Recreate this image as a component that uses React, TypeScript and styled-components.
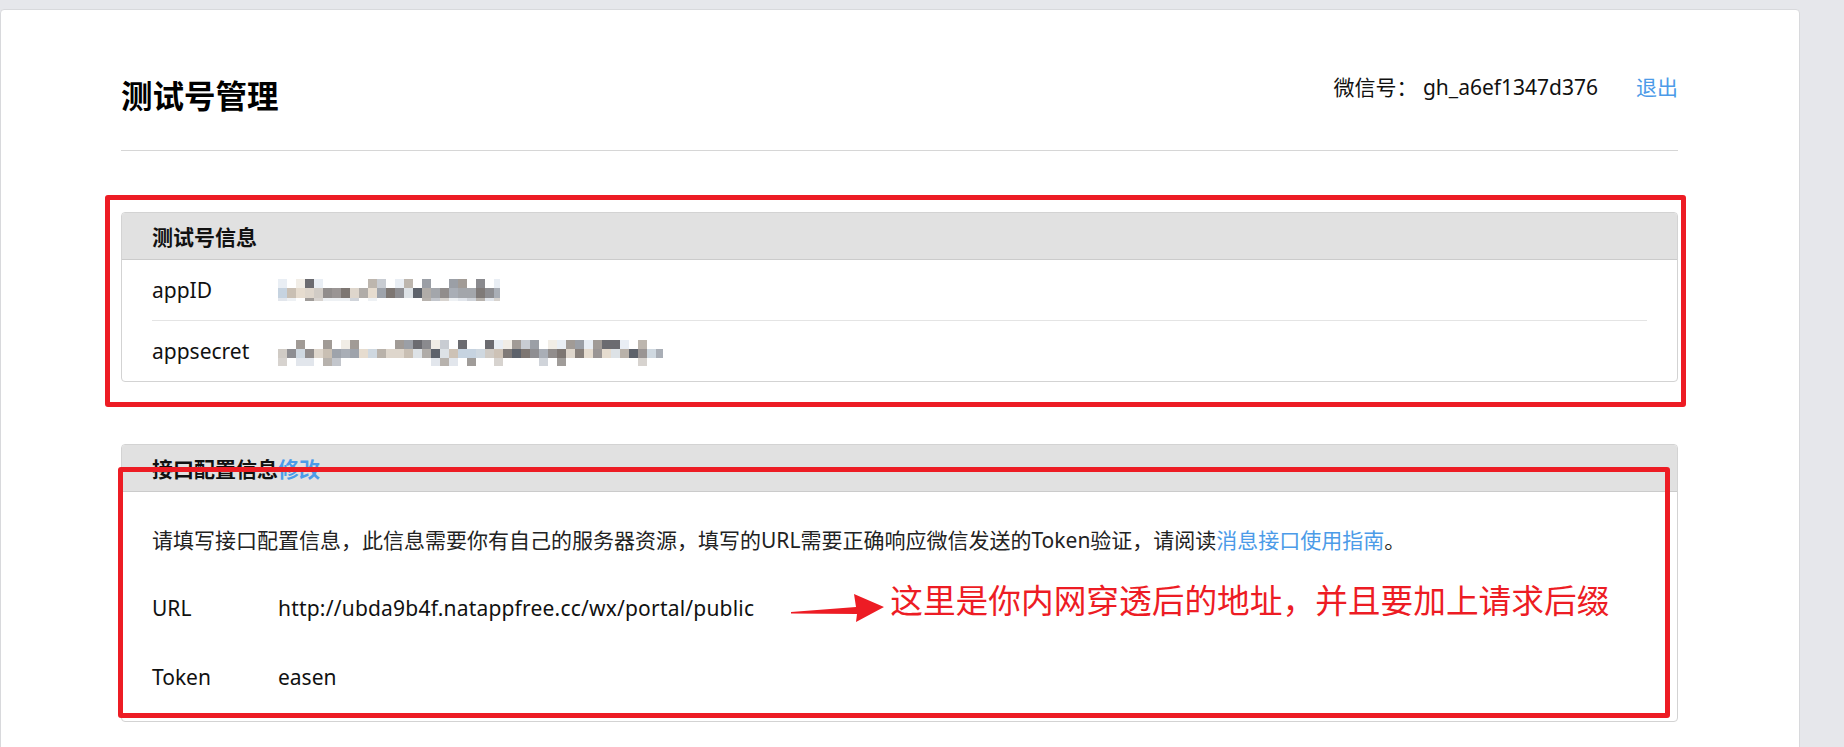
import React from 'react';
import styled, { createGlobalStyle } from 'styled-components';

const GlobalStyle = createGlobalStyle`
  html, body {
    margin: 0;
    padding: 0;
    background: #e6e7eb;
  }
  body {
    font-family: "Noto Sans", "Noto Sans CJK SC", sans-serif;
    color: #1a1a1a;
  }
`;

const Page = styled.div`
  box-sizing: border-box;
  min-height: 100vh;
  padding: 9px 44px 0 0;
`;

const Card = styled.main`
  box-sizing: border-box;
  width: 1800px;
  min-height: 780px;
  background: #ffffff;
  border: 1px solid #d8d9dc;
  border-radius: 4px;
  padding: 0 121px 60px 120px;
`;

const Header = styled.header`
  display: flex;
  justify-content: space-between;
  align-items: flex-start;
  padding: 61.5px 0 32px;
  border-bottom: 1px solid #d6d6d6;
`;

const Title = styled.h1`
  margin: 2.5px 0 0;
  font-size: 31.5px;
  line-height: 44px;
  font-weight: 700;
  color: #000;
`;

const Account = styled.div`
  display: flex;
  align-items: center;
  font-size: 21px;
  line-height: 31.5px;
  color: #111;
  white-space: pre;
`;

const Link = styled.a<{ $gap?: number }>`
  color: #4c9be8;
  text-decoration: none;
  cursor: pointer;
  margin-left: ${(p) => p.$gap ?? 0}px;
`;

const Panel = styled.section<{ $gap: number }>`
  position: relative;
  margin-top: ${(p) => p.$gap}px;
  border: 1px solid #d3d3d3;
  border-radius: 4px;
  background: #fff;
`;

const PanelHeader = styled.div`
  display: flex;
  align-items: center;
  height: 46px;
  padding: 0 30px;
  background: #e1e1e1;
  border-bottom: 1px solid #cbcbcb;
  border-radius: 3px 3px 0 0;
  font-size: 21px;
  font-weight: 700;
  color: #111;
`;

const PanelBody = styled.div<{ $pad: string }>`
  padding: ${(p) => p.$pad};
`;

const Row = styled.div<{ $h: number; $divider?: boolean }>`
  display: flex;
  align-items: center;
  height: ${(p) => p.$h}px;
  margin: 0 30px;
  border-bottom: ${(p) => (p.$divider ? '1px solid #e4e4e4' : 'none')};
  font-size: 21px;
  color: #111;
  white-space: nowrap;
`;

const Label = styled.div`
  flex: none;
  width: 126px;
`;

const Value = styled.div<{ $track?: number }>`
  flex: none;
  letter-spacing: ${(p) => p.$track ?? 0}px;
`;

const Note = styled.p`
  margin: 0;
  font-size: 21px;
  color: #222;
`;

const Highlight = styled.div<{ $t: number; $r: number; $b: number; $l: number }>`
  position: absolute;
  top: ${(p) => p.$t}px;
  right: ${(p) => p.$r}px;
  bottom: ${(p) => p.$b}px;
  left: ${(p) => p.$l}px;
  border: 5px solid #ed1c24;
  border-radius: 3px;
  pointer-events: none;
  z-index: 2;
`;

const Callout = styled.div`
  display: flex;
  align-items: center;
  margin-left: 36px;
`;

const CalloutText = styled.span`
  margin: 0 0 18px 5px;
  font-family: "Noto Sans CJK SC", sans-serif;
  font-size: 32.7px;
  line-height: 40px;
  color: #ed1c24;
  white-space: nowrap;
`;

const MosaicSvg = styled.svg`
  display: block;
`;

type MosaicRow = { h: number; density: number; palette: string[] };

function makeRng(seed: number) {
  let s = seed >>> 0;
  return () => {
    s = (s * 1664525 + 1013904223) >>> 0;
    return s / 4294967296;
  };
}

const midTones = [
  '#d0cbc5', '#5d626b', '#b9b2aa', '#c6d3e0', '#a3a6ab', '#8e8e92', '#a9aeb6',
  '#877f7a', '#ded6cc', '#e6dccf', '#9a9594', '#cfd8e0', '#cdc2b6', '#7f7a78',
  '#dde2e6', '#918d8c', '#b0aca8', '#7d7672', '#c9bfb3', '#9ea3ab',
];
const darkTones = ['#6b6b70', '#8a8a8e', '#a19b96', '#bdb6ae', '#9b9fa6', '#c8ccd2', '#f1ede6', '#e9eef4'];
const lightTones = ['#d7d3cf', '#c3c6cc', '#e2e6ec', '#b7b2ad', '#a09c99', '#eef1f4', '#d0d4da'];

const Mosaic: React.FC<{ width: number; seed: number; rows: MosaicRow[]; cell?: number }> = ({
  width,
  seed,
  rows,
  cell = 9,
}) => {
  const rng = makeRng(seed);
  const cols = Math.ceil(width / cell);
  const rects: React.ReactNode[] = [];
  let y = 0;
  rows.forEach((row, ri) => {
    for (let c = 0; c < cols; c++) {
      if (rng() < row.density) {
        const color = row.palette[Math.floor(rng() * row.palette.length)];
        const w = Math.min(cell, width - c * cell);
        rects.push(<rect key={`${ri}-${c}`} x={c * cell} y={y} width={w} height={row.h} fill={color} />);
      } else {
        rng();
      }
    }
    y += row.h;
  });
  return (
    <MosaicSvg width={width} height={y} viewBox={`0 0 ${width} ${y}`}>
      {rects}
    </MosaicSvg>
  );
};

const Arrow: React.FC = () => (
  <svg width="95" height="30" viewBox="0 0 95 30">
    <polygon
      points="1,19 66,14 64,1 94,14 66,29 67,21 1,20.5"
      fill="#ed1c24"
    />
  </svg>
);

export default function App() {
  return (
    <>
      <GlobalStyle />
      <Page>
        <Card>
          <Header>
            <Title>测试号管理</Title>
            <Account>
              <span>微信号： gh_a6ef1347d376</span>
              <Link $gap={38}>退出</Link>
            </Account>
          </Header>

          <Panel $gap={61}>
            <Highlight $t={-18} $r={-9} $b={-26} $l={-17} />
            <PanelHeader>测试号信息</PanelHeader>
            <Row $h={60} $divider>
              <Label>appID</Label>
              <Value>
                <Mosaic
                  width={222}
                  seed={7}
                  rows={[
                    { h: 9, density: 0.45, palette: darkTones },
                    { h: 10, density: 1, palette: midTones },
                    { h: 3, density: 0.8, palette: lightTones },
                  ]}
                />
              </Value>
            </Row>
            <Row $h={60}>
              <Label>appsecret</Label>
              <Value>
                <Mosaic
                  width={385}
                  seed={31}
                  rows={[
                    { h: 3, density: 0, palette: darkTones },
                    { h: 9, density: 0.6, palette: darkTones },
                    { h: 9, density: 1, palette: midTones },
                    { h: 8, density: 0.4, palette: lightTones },
                  ]}
                />
              </Value>
            </Row>
          </Panel>

          <Panel $gap={62}>
            <Highlight $t={22} $r={7} $b={3} $l={-4} />
            <PanelHeader>
              接口配置信息<Link>修改</Link>
            </PanelHeader>
            <PanelBody $pad="12.5px 0 9px">
              <Row $h={69}>
                <Note>
                  请填写接口配置信息，此信息需要你有自己的服务器资源，填写的URL需要正确响应微信发送的Token验证，请阅读
                  <Link>消息接口使用指南</Link>。
                </Note>
              </Row>
              <Row $h={69}>
                <Label>URL</Label>
                <Value $track={0.2}>http://ubda9b4f.natappfree.cc/wx/portal/public</Value>
                <Callout>
                  <Arrow />
                  <CalloutText>这里是你内网穿透后的地址，并且要加上请求后缀</CalloutText>
                </Callout>
              </Row>
              <Row $h={69}>
                <Label>Token</Label>
                <Value>easen</Value>
              </Row>
            </PanelBody>
          </Panel>
        </Card>
      </Page>
    </>
  );
}
